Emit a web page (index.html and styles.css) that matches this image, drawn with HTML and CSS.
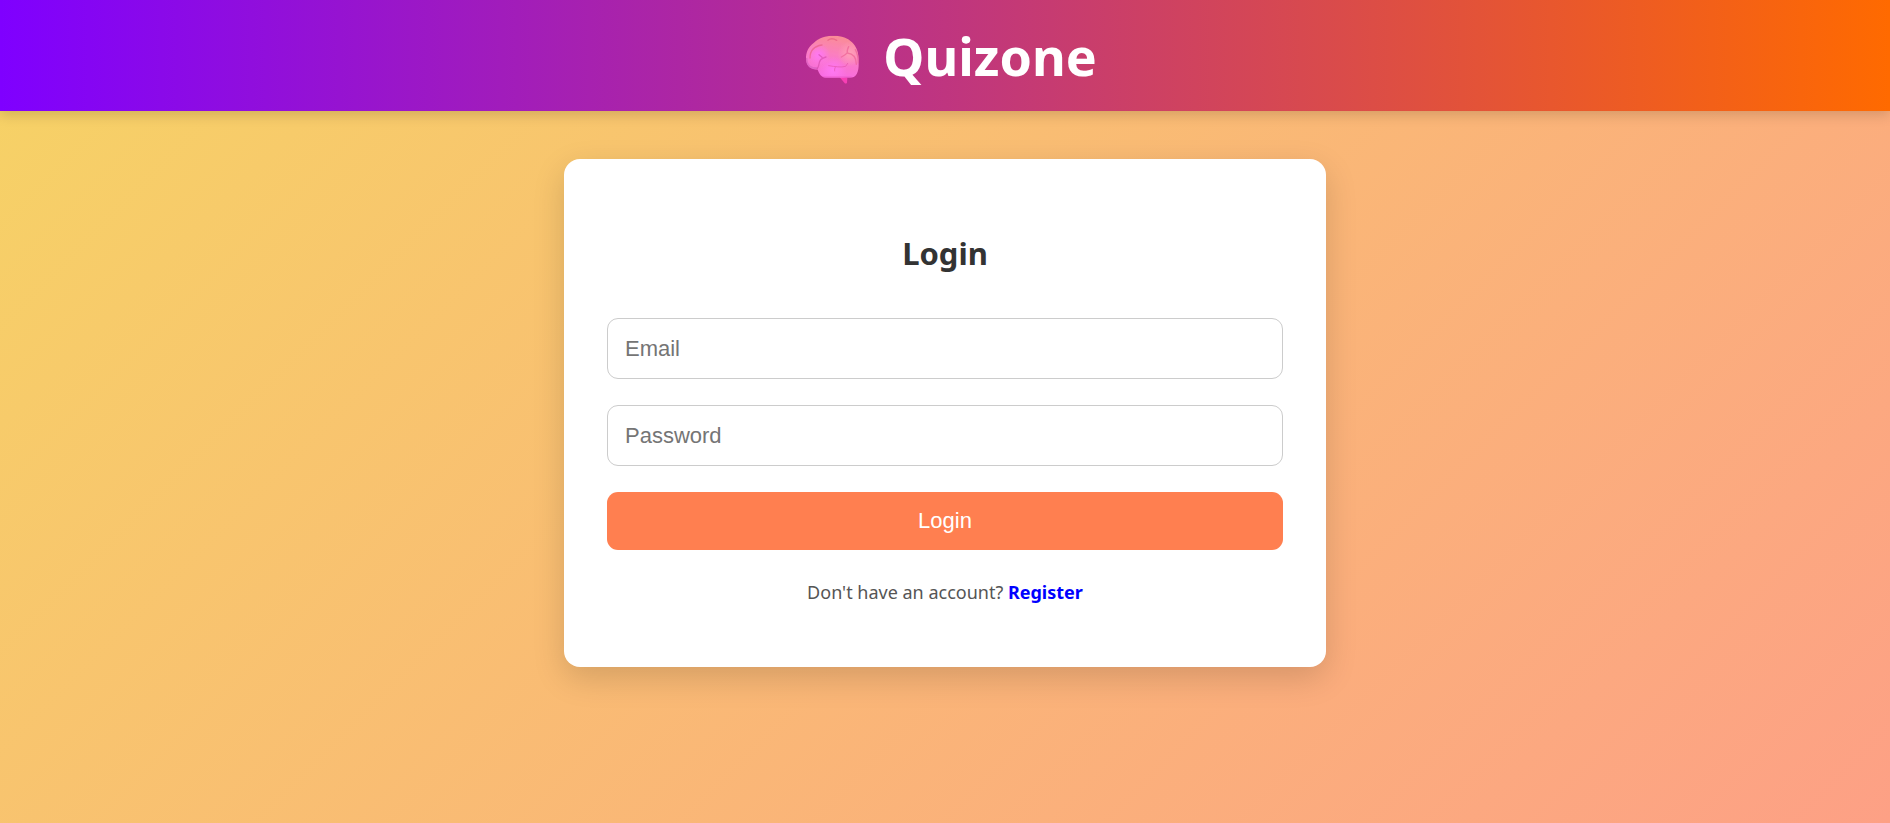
FILE: index.html
```html
<!DOCTYPE html>
<html lang="en">
<head>
<meta charset="utf-8">
<meta name="viewport" content="width=device-width, initial-scale=1">
<title>Quizone</title>
<link rel="stylesheet" href="styles.css">
</head>
<body>
<header class="header">
  <svg class="logo" viewBox="0 10 240 192" aria-hidden="true">
    <defs>
      <linearGradient id="brain" x1="0.6" y1="0" x2="0.4" y2="1">
        <stop offset="0" stop-color="#fa8f91"/>
        <stop offset="0.45" stop-color="#fb7fc0"/>
        <stop offset="1" stop-color="#f868e4"/>
      </linearGradient>
      <radialGradient id="glow">
        <stop offset="0" stop-color="#ff78f4"/>
        <stop offset="1" stop-color="#ff78f4" stop-opacity="0"/>
      </radialGradient>
      <radialGradient id="warm">
        <stop offset="0" stop-color="#ffa0b8"/>
        <stop offset="1" stop-color="#ffa0b8" stop-opacity="0"/>
      </radialGradient>
      <clipPath id="shape">
        <path d="M74 147C54 147 40 136 39 117C38 96 46 78 62 67C77 51 97 45 121 45C146 45 166 52 177 65C191 78 198 98 197 126C198 153 190 171 172 171H97C85 169 79 160 74 147Z"/>
      </clipPath>
    </defs>
    <path d="M137 166L163 171L162 186Q158 191 154 186Z" fill="#f83fb5"/>
    <g clip-path="url(#shape)">
      <rect x="35" y="40" width="165" height="135" fill="url(#brain)"/>
      <circle cx="77" cy="103" r="35" fill="url(#glow)"/>
      <circle cx="120" cy="148" r="42" fill="url(#glow)"/>
      <circle cx="171" cy="99" r="38" fill="url(#warm)"/>
      <path d="M40 112C41 137 55 144 75 143" fill="none" stroke="#c957b5" stroke-width="6" opacity="0.5"/>
      <g fill="none" stroke-linecap="round" stroke-linejoin="round" opacity="0.7">
        <path d="M51 112C51 90 60 77 87 73M105 59C113 52 123 54 131 59" stroke="#e85f83" stroke-width="4"/>
        <path d="M99 109C87 112 79 118 78 130C77 138 74 143 71 147M78 102L87 110" stroke="#d950ae" stroke-width="4"/>
        <path d="M167 78C164 84 161 90 163 96C158 103 151 106 145 109M163 97C179 99 190 110 190 131M187 87C193 98 196 113 196 127" stroke="#ed6395" stroke-width="4"/>
        <path d="M107 135C126 138 145 141 158 137L164 128M128 138C125 143 124 147 125 151" stroke="#e557ad" stroke-width="3"/>
      </g>
      <path d="M82 169H176" stroke="#ef5ccc" stroke-width="3"/>
    </g>
  </svg>
  <h1 class="brand">Quizone</h1>
</header>
<main class="card">
  <h2 class="title">Login</h2>
  <form class="form">
    <input class="field" type="email" placeholder="Email" aria-label="Email">
    <input class="field" type="password" placeholder="Password" aria-label="Password">
    <button class="submit" type="submit">Login</button>
  </form>
  <p class="note">Don't have an account? <a class="link" href="#register">Register</a></p>
</main>
</body>
</html>
```

FILE: styles.css
```css
* {
  box-sizing: border-box;
}

body {
  margin: 0;
  min-height: 100vh;
  background: linear-gradient(135deg, #f6d365, #fda085);
  font-family: "Noto Sans", sans-serif;
}

.header {
  display: flex;
  align-items: center;
  justify-content: center;
  gap: 10px;
  padding: 18px 24px 17px;
  background: linear-gradient(90deg, #7f00ff, #ff6a00);
  box-shadow: 0 4px 12px rgba(0, 0, 0, 0.15);
}

.logo {
  width: 80px;
  height: 64px;
}

.brand {
  margin: 0;
  color: #fff;
  font-size: 52px;
  font-weight: 700;
  line-height: 76px;
}

.card {
  width: calc(100% - 32px);
  max-width: 762px;
  margin: 48px auto;
  padding: 72px 43px 61px;
  border-radius: 16px;
  background: #fff;
  box-shadow: 0 11px 32px rgba(0, 0, 0, 0.15);
  text-align: center;
}

.title {
  margin: 0 0 43px;
  color: #333;
  font-size: 31px;
  font-weight: 700;
  line-height: 44px;
}

.form {
  display: grid;
  gap: 26px;
}

.field,
.submit {
  width: 100%;
  border-radius: 11px;
  font-family: "Liberation Sans", Arial, sans-serif;
  font-size: 22px;
}

.field {
  height: 61px;
  padding: 0 17px;
  border: 1px solid #ccc;
  background: #fff;
}

.field::placeholder {
  color: #757575;
}

.submit {
  height: 58px;
  border: 0;
  background: #ff7f50;
  color: #fff;
  cursor: pointer;
}

.note {
  margin: 28px 0 0;
  color: #555;
  font-size: 18px;
  line-height: 28px;
}

.link {
  color: #00f;
  font-weight: 700;
  text-decoration: none;
}
```
